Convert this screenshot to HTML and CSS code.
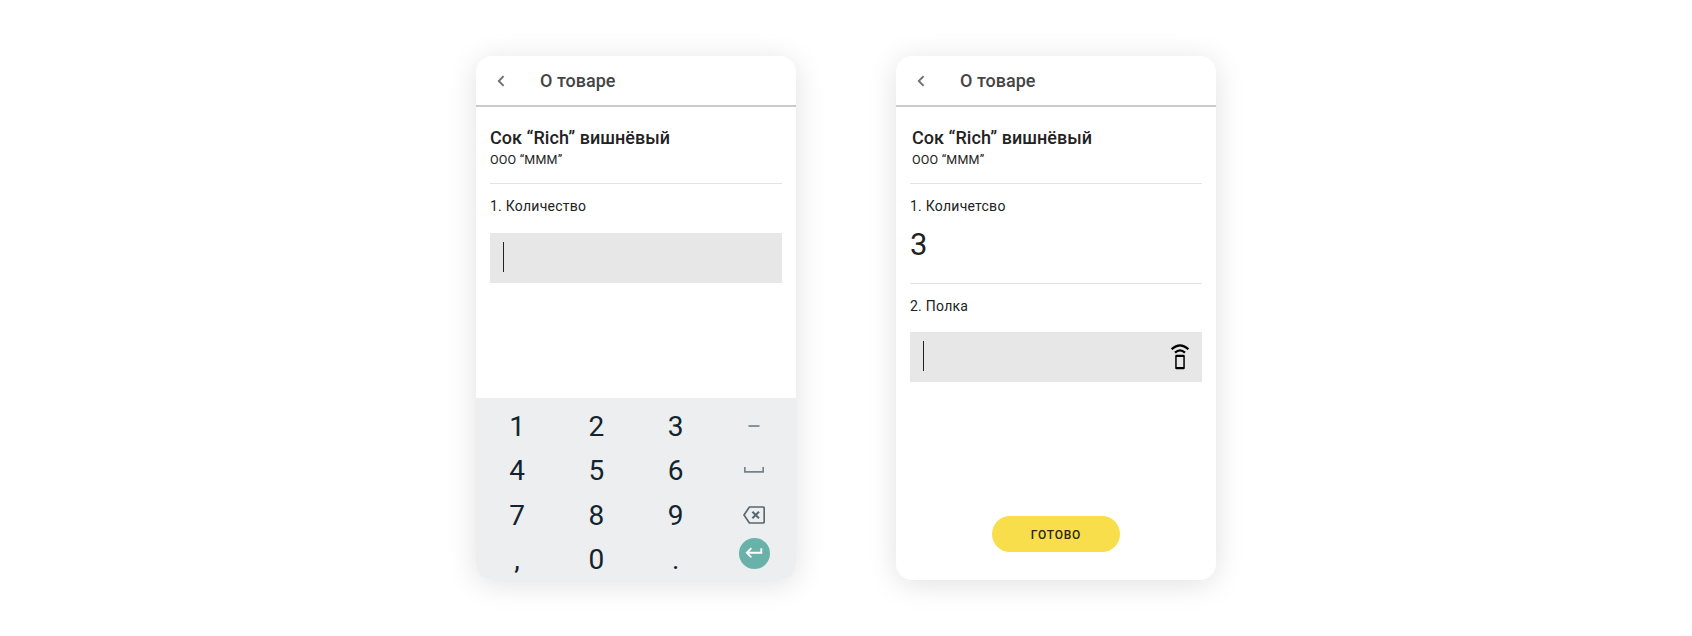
FILE: index.html
```html
<!DOCTYPE html>
<html lang="ru">
<head>
<meta charset="utf-8">
<title>О товаре</title>
<link rel="stylesheet" href="styles.css">
</head>
<body>
<main class="stage">
  <section class="phone">
    <header class="bar">
      <svg class="back" viewBox="0 0 8 12"><path d="M6.600 1.200 1.800 6l4.800 4.800"/></svg>
      <h1 class="bar-title">О товаре</h1>
    </header>
    <div class="product">
      <h2 class="name">Сок “Rich” вишнёвый</h2>
      <p class="maker">ООО “МММ”</p>
    </div>
    <div class="step">
      <p class="label">1. Количество</p>
      <div class="field"><span class="caret"></span></div>
    </div>
    <div class="keypad">
      <span class="key">1</span><span class="key">2</span><span class="key">3</span>
      <span class="key key-icon"><svg class="dash" viewBox="0 0 12 2"><path d="M.5 1h11"/></svg></span>
      <span class="key">4</span><span class="key">5</span><span class="key">6</span>
      <span class="key key-icon"><svg class="space" viewBox="0 0 20 6"><path d="M.8 0v4.800h18.400V0"/></svg></span>
      <span class="key">7</span><span class="key">8</span><span class="key">9</span>
      <span class="key key-icon"><svg class="erase" viewBox="0 0 22 18"><path d="M6.400 1H20a1.200 1.200 0 0 1 1.200 1.200v13.600A1.200 1.200 0 0 1 20 17H6.400L1 9z"/><path class="cross" d="m9.400 5.700 6.600 6.600m0-6.600-6.600 6.600"/></svg></span>
      <span class="key">,</span><span class="key">0</span><span class="key">.</span>
      <span class="key key-enter"><span class="enter"><svg class="arrow" viewBox="0 0 18 12"><path d="M16.300 1.200v4.600H2M6.400 1.200 1.800 5.800l4.600 4.600"/></svg></span></span>
    </div>
  </section>

  <section class="phone">
    <header class="bar">
      <svg class="back" viewBox="0 0 8 12"><path d="M6.600 1.200 1.800 6l4.800 4.800"/></svg>
      <h1 class="bar-title">О товаре</h1>
    </header>
    <div class="product product-inset">
      <h2 class="name">Сок “Rich” вишнёвый</h2>
      <p class="maker">ООО “МММ”</p>
    </div>
    <div class="step step-done">
      <p class="label">1. Количетсво</p>
      <p class="value">3</p>
    </div>
    <div class="step step-shelf">
      <p class="label">2. Полка</p>
      <div class="field"><span class="caret"></span>
        <svg class="scan" viewBox="0 0 18 26"><path d="M.6 5.200Q9-2.600 17.400 5.200M4 8.600Q9 4.200 14 8.600"/><path class="body" fill-rule="evenodd" d="M5.400 10.800h7.200a1.200 1.200 0 0 1 1.200 1.200v12a1.200 1.200 0 0 1-1.200 1.200H5.400A1.200 1.200 0 0 1 4.200 24V12a1.200 1.200 0 0 1 1.200-1.200zM5.700 12.900v10h6.600v-10z"/></svg>
      </div>
    </div>
    <button class="done" type="button">ГОТОВО</button>
  </section>
</main>
</body>
</html>
```
FILE: styles.css
```css
* { box-sizing: border-box; }

body {
  margin: 0;
  background: #fff;
  font-family: Roboto, "Liberation Sans", sans-serif;
  color: #222;
}

h1, h2, p { margin: 0; }

svg { display: block; fill: none; }

.stage {
  display: flex;
  justify-content: center;
  gap: 100px;
  height: 636px;
  padding-top: 56px;
  overflow: hidden;
}

.phone {
  display: flex;
  flex-direction: column;
  width: 320px;
  height: 524px;
  border-radius: 16px;
  background: #fff;
  box-shadow: 0 4px 30px rgba(0, 0, 0, .12);
}

.bar {
  display: flex;
  align-items: center;
  height: 51px;
  padding-left: 21px;
  border-bottom: 2px solid #cbcbcb;
}

.back {
  width: 8px;
  height: 12px;
  stroke: #707070;
  stroke-width: 1.9;
}

.bar-title {
  margin-left: 35px;
  font-size: 18px;
  line-height: 22px;
  font-weight: 500;
  color: #444;
}

.product {
  height: 77px;
  margin: 0 14px;
  padding-top: 20px;
  border-bottom: 1px solid #e4e4e4;
}

.product-inset { padding-left: 2px; }

.name {
  font-size: 18px;
  line-height: 22px;
  font-weight: 500;
  letter-spacing: .05px;
}

.maker {
  margin-top: 3px;
  font-size: 12.5px;
  line-height: 16px;
  letter-spacing: .2px;
}

.step {
  margin: 0 14px;
  padding-top: 12px;
}

.step-done {
  height: 100px;
  border-bottom: 1px solid #e4e4e4;
}

.label {
  font-size: 14px;
  line-height: 20px;
  letter-spacing: .25px;
}

.value {
  margin-top: 11px;
  font-size: 31px;
  line-height: 36px;
}

.field {
  display: flex;
  justify-content: space-between;
  height: 50px;
  margin-top: 17px;
  padding: 9px 12px;
  background: #e7e7e7;
}

.step-shelf .field { margin-top: 16px; }

.caret {
  width: 1px;
  height: 30px;
  margin-left: 1px;
  background: #222;
}

.scan {
  width: 18px;
  height: 26px;
  margin: 3px 1px 0 0;
  stroke: #000;
  stroke-width: 2.2;
}

.body { fill: #000; stroke: none; }

.keypad {
  display: grid;
  grid-template-columns: repeat(4, 79.3px);
  grid-template-rows: repeat(4, 44.3px);
  height: 182px;
  margin-top: auto;
  padding: 7px 0 0 1.4px;
  border-radius: 0 0 16px 16px;
  background: #eceef0;
}

.key {
  display: flex;
  align-items: center;
  justify-content: center;
  font-size: 28px;
  line-height: 32px;
  color: #13242d;
}

.key-icon { padding: 0 2px 2px 0; }

.dash { width: 12px; height: 2px; stroke: #75828a; stroke-width: 1.7; }
.space { width: 20px; height: 6px; stroke: #75828a; stroke-width: 1.7; }
.erase { width: 22px; height: 18px; stroke: #586770; stroke-width: 1.7; }
.cross { stroke-width: 2; }

.key-enter { align-items: flex-start; }

.enter {
  display: flex;
  align-items: center;
  justify-content: center;
  width: 31px;
  height: 31px;
  margin-right: 1px;
  border-radius: 50%;
  background: #68b2aa;
}

.arrow { width: 18px; height: 12px; stroke: #fff; stroke-width: 1.9; }

.done {
  align-self: center;
  width: 128px;
  height: 36px;
  margin: auto 0 28px;
  padding: 1px 0 0;
  border: 0;
  border-radius: 18px;
  background: #f8de4b;
  font: 500 12px/16px Roboto, "Liberation Sans", sans-serif;
  letter-spacing: .8px;
  color: #2b270c;
}
```
